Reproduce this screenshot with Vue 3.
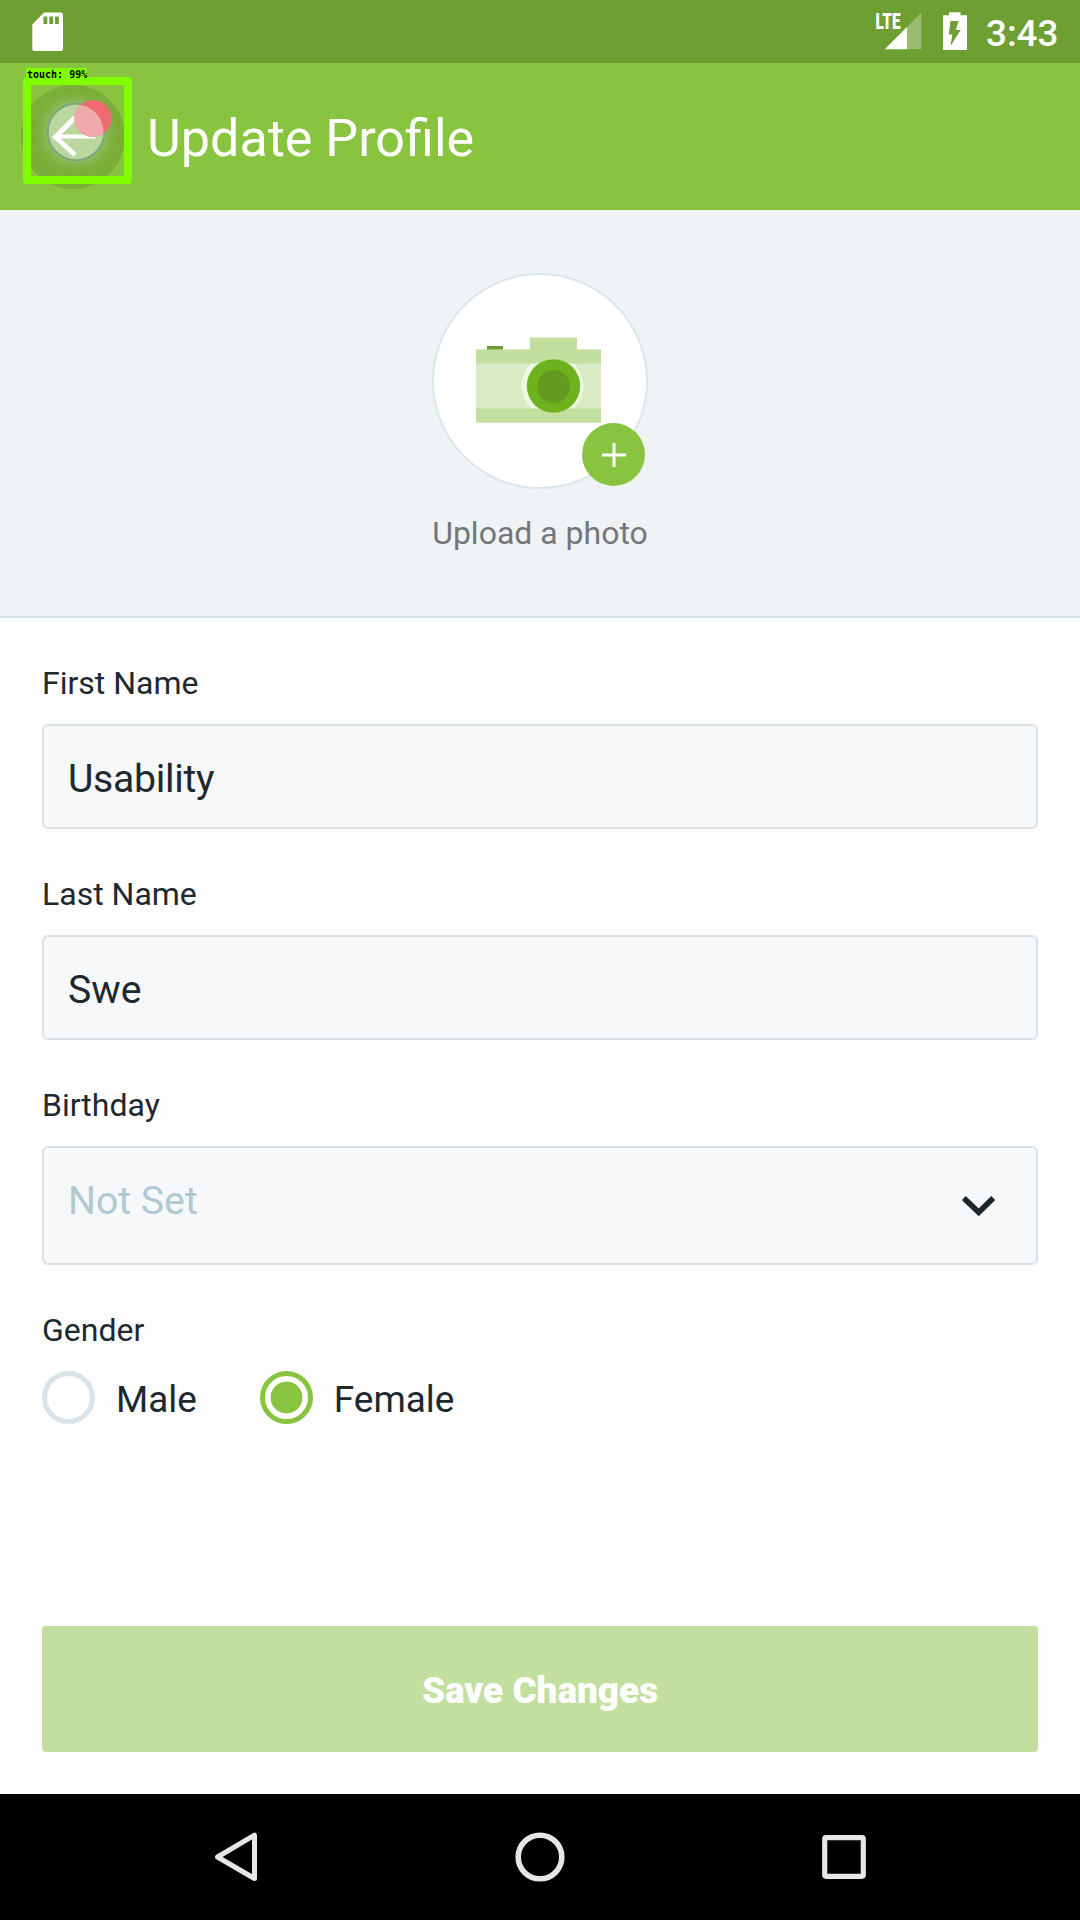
<script setup>
import { ref } from 'vue'

const textFields = ref([
  { label: 'First Name', value: 'Usability' },
  { label: 'Last Name', value: 'Swe' },
])
const genders = ['Male', 'Female']
const gender = ref('Female')
</script>

<template>
  <div class="screen">
    <div class="status">
      <svg class="sd" width="31" height="39" viewBox="32 12 31 39">
        <path d="M44 12.6H60.5Q63 12.6 63 15V48.400Q63 51 60.500 51H35Q32.300 51 32.300 48.400V24.500Z" fill="#fff" />
        <path d="M43.500 16.500h3.800v7.500h-3.800zM49.300 16.500h3.800v7.500h-3.800zM55.100 16.500h3.800v7.500h-3.800z" fill="#6e9f33" />
      </svg>
      <svg class="signal" width="52" height="46" viewBox="870 6 52 46">
        <path d="M907 27L921.300 12.700V49.300H907Z" fill="#9abc70" />
        <path d="M884.700 49.300L907 27V49.300Z" fill="#fff" />
        <text x="875.500" y="29.300" textLength="25" lengthAdjust="spacingAndGlyphs" class="lte">LTE</text>
      </svg>
      <svg class="battery" width="24" height="40" viewBox="943 12 24 40">
        <path d="M949 12.300h11.500v3H967V50H943V15.300h6z" fill="#fff" />
        <path d="M950.500 21h8l-2.500 9h4.700L950.500 46l1.800-11.500h-3.500z" fill="#6e9f33" />
      </svg>
      <span class="clock">3:43</span>
    </div>

    <header class="bar">
      <div class="back">
        <svg width="147" height="147" viewBox="0 63 147 147">
          <defs>
            <radialGradient id="halo">
              <stop offset="0.68" stop-color="#a2c67c" stop-opacity="0.9" />
              <stop offset="0.82" stop-color="#96be64" stop-opacity="0.4" />
              <stop offset="1" stop-color="#96be64" stop-opacity="0" />
            </radialGradient>
          </defs>
          <circle cx="73" cy="137" r="52" fill="#7aae39" />
          <circle cx="76" cy="132" r="40" fill="url(#halo)" />
          <circle cx="76" cy="132" r="28.300" fill="#bbd69e" stroke="#7ba37c" stroke-width="2.200" stroke-opacity="0.9" />
          <path d="M75 117.500L55.500 137L75 155" fill="none" stroke="#fff" stroke-width="5" />
          <path d="M55 134.500H83L95.500 136.500V138.500H55Z" fill="#fff" />
          <circle cx="93" cy="118.500" r="18.500" fill="#ec6a70" />
          <clipPath id="pointer"><circle cx="76" cy="132" r="27.500" /></clipPath>
          <circle cx="93" cy="118.500" r="18.500" fill="#f1a9ac" clip-path="url(#pointer)" />
        </svg>
        <div class="detect"></div>
        <span class="tag">touch: 99%</span>
      </div>
      <h1>Update Profile</h1>
    </header>

    <section class="photo">
      <div class="avatar">
        <svg width="126" height="86" viewBox="476 337 126 86">
          <path d="M476 349.500h125v73H476z" fill="#d9ebc4" />
          <circle cx="552.500" cy="386" r="31" fill="#eef8e2" />
          <path d="M476 349.500H530V337.500H577V349.500H601V363.500H476zM476 408.500h125v14H476z" fill="#c2df9d" />
          <path d="M487 346h16v3.500h-16z" fill="#6c9d34" />
          <circle cx="553.500" cy="386" r="26.700" fill="#6eb21d" />
          <circle cx="553.700" cy="386.500" r="16.500" fill="#629b20" />
        </svg>
        <div class="plus">
          <svg width="24" height="24" viewBox="0 0 24 24"><path d="M0 12H24M12 0V24" stroke="#fff" stroke-width="3" /></svg>
        </div>
      </div>
      <p>Upload a photo</p>
    </section>

    <main class="form">
      <div v-for="field in textFields" :key="field.label" class="group">
        <div class="label">{{ field.label }}</div>
        <div class="field"><span :class="{ tight: field.value.length > 5 }">{{ field.value }}</span></div>
      </div>
      <div class="group">
        <div class="label">Birthday</div>
        <div class="field select">
          <span>Not Set</span>
          <svg width="34" height="22" viewBox="962 1195 34 22">
            <path d="M963.800 1198L978.700 1212.300L993.300 1198" fill="none" stroke="#1b272d" stroke-width="5.600" />
          </svg>
        </div>
      </div>
      <div class="label gender-label">Gender</div>
      <div class="radios">
        <div v-for="g in genders" :key="g" class="radio" :class="{ on: g === gender }">
          <i></i><span>{{ g }}</span>
        </div>
      </div>
      <div class="save">Save Changes</div>
    </main>

    <nav class="nav">
      <svg width="50" height="50" viewBox="211 1832 50 50">
        <path d="M254.500 1835.200V1878.500L217.500 1857Z" fill="none" stroke="#e6e6e6" stroke-width="5" stroke-linejoin="round" />
      </svg>
      <svg width="50" height="50" viewBox="0 0 50 50"><circle cx="25" cy="25" r="21.800" fill="none" stroke="#e6e6e6" stroke-width="5.600" /></svg>
      <svg width="50" height="50" viewBox="0 0 50 50"><rect x="5.700" y="5.700" width="38.600" height="38.600" rx="1.500" fill="none" stroke="#e6e6e6" stroke-width="5.200" /></svg>
    </nav>
  </div>
</template>

<style>
body {
  margin: 0;
}
</style>

<style scoped>
* {
  box-sizing: border-box;
}
.screen {
  width: 1080px;
  height: 1920px;
  display: flex;
  flex-direction: column;
  background: #fefefe;
  font-family: Roboto, "Liberation Sans", sans-serif;
  color: #1d292f;
  overflow: hidden;
}
svg {
  display: block;
  flex: none;
}
.status {
  height: 63px;
  flex: none;
  background: #6e9f33;
  display: flex;
  align-items: flex-start;
  padding: 12px 22px 0 32px;
}
.signal {
  margin-left: auto;
  margin-top: -6px;
  overflow: visible;
}
.battery {
  margin-left: 21px;
}
.lte {
  font-size: 21.500px;
  font-weight: 900;
  fill: #fff;
}
.clock {
  margin-left: 19px;
  width: 72px;
  white-space: nowrap;
  font-size: 36.750px;
  font-weight: 500;
  line-height: 44px;
  color: #fff;
}
.bar {
  height: 147px;
  flex: none;
  background: #88c440;
  display: flex;
  align-items: center;
}
.back {
  position: relative;
  width: 147px;
  height: 147px;
}
.detect {
  position: absolute;
  left: 23px;
  top: 14px;
  width: 109px;
  height: 107px;
  border: 8px solid #80ff00;
  border-radius: 4px;
}
.tag {
  position: absolute;
  left: 26px;
  top: 5px;
  width: 61px;
  height: 12px;
  padding-left: 1px;
  background: #80ff00;
  color: #000;
  font: 700 10px/14px "DejaVu Sans Mono", "Liberation Mono", monospace;
  white-space: nowrap;
}
h1 {
  margin: 0;
  padding-top: 5px;
  font-size: 52.100px;
  font-weight: 400;
  line-height: 62px;
  color: #fff;
}
.photo {
  height: 408px;
  flex: none;
  background: #eff3f6;
  border-bottom: 2px solid #d6e1e9;
  display: flex;
  flex-direction: column;
  align-items: center;
  padding-top: 63px;
}
.avatar {
  position: relative;
  width: 216px;
  height: 216px;
  border: 2px solid #dbe6ec;
  border-radius: 50%;
  background: #fff;
  padding: 62px 0 0 42px;
}
.plus {
  position: absolute;
  left: 148px;
  top: 148px;
  width: 63px;
  height: 63px;
  border-radius: 50%;
  background: #88c440;
  display: flex;
  align-items: center;
  justify-content: center;
  padding-left: 1px;
}
.photo p {
  margin: 25px 0 0;
  font-size: 32px;
  line-height: 38px;
  color: #74777a;
}
.form {
  flex: 1;
  padding: 46px 42px 0;
}
.group {
  margin-bottom: 46px;
}
.label {
  font-size: 32px;
  line-height: 38px;
  height: 38px;
}
.field {
  margin-top: 22px;
  height: 105px;
  border: 2px solid #d9e1e7;
  border-radius: 6px;
  background: #f7f8fa;
  padding-left: 24px;
  font-size: 39.200px;
  line-height: 107px;
}
.tight {
  letter-spacing: -0.300px;
}
.select {
  height: 119px;
  display: flex;
  justify-content: space-between;
  padding-right: 40px;
  color: #b0c8d1;
}
.select svg {
  margin-top: 47px;
}
.radios {
  display: flex;
  gap: 63px;
  margin-top: 22px;
}
.radio {
  display: flex;
  font-size: 36.900px;
  line-height: 57px;
  height: 53px;
}
.radio i {
  width: 53px;
  height: 53px;
  border: 5px solid #d8e3ea;
  border-radius: 50%;
  margin-right: 21px;
}
.radio.on i {
  border-color: #88c440;
  background: radial-gradient(circle, #88c440 15.500px, #fff 16.300px);
}
.save {
  margin-top: 202px;
  height: 126px;
  border-radius: 4px;
  background: #c3df9f;
  color: #fff;
  font-size: 36.900px;
  font-weight: 900;
  line-height: 130px;
  text-align: center;
}
.nav {
  height: 126px;
  flex: none;
  background: #000;
  display: flex;
  align-items: center;
  justify-content: space-between;
  padding: 0 211px;
}
</style>
